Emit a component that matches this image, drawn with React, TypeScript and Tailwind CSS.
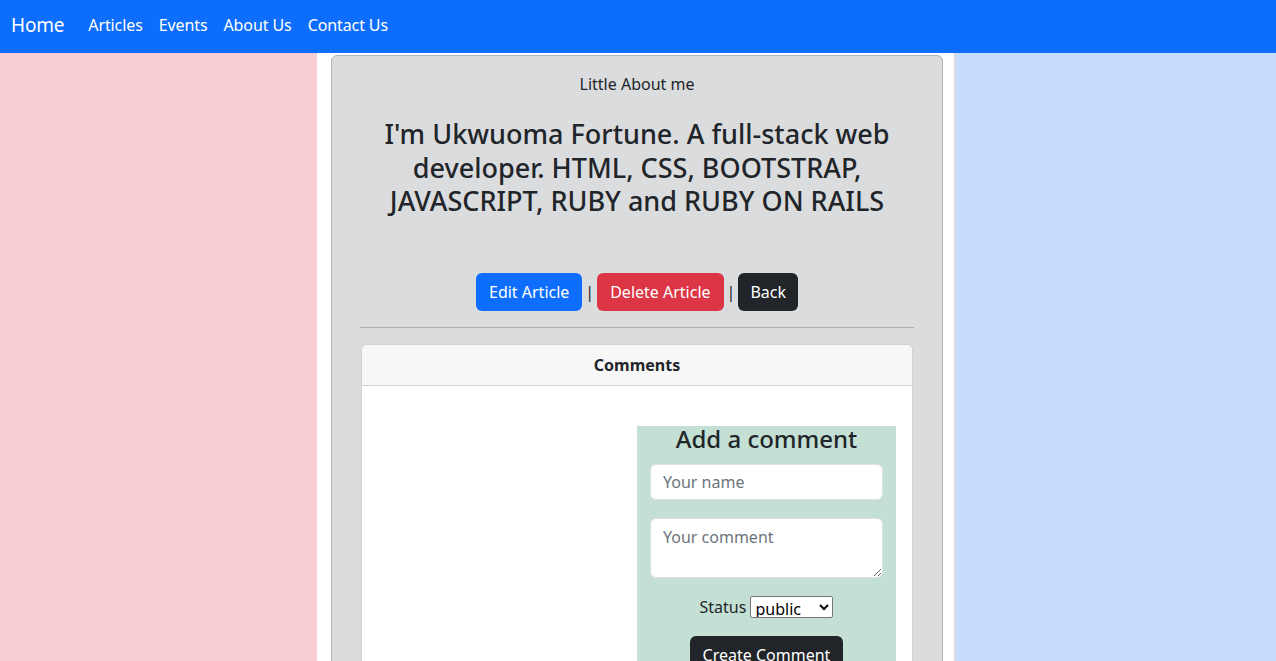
import React from "react";

export default function App() {
  return (
    <div className="min-h-screen bg-white text-[#212529] font-['Noto_Sans',sans-serif]">
      <nav className="h-[53px] bg-[#0d6efd] flex items-center pl-[11px] pb-[4px]">
        <span className="text-[19px] text-white mr-[16px] leading-[30px] tracking-[-0.2px]">Home</span>
        <div className="flex items-center text-[16px] text-white leading-[24px] tracking-[-0.1px]">
          <span className="px-[8px]">Articles</span>
          <span className="px-[8px]">Events</span>
          <span className="px-[8px]">About Us</span>
          <span className="px-[8px]">Contact Us</span>
        </div>
      </nav>
      <div className="flex h-[608px] overflow-hidden">
        <div className="w-[317px] bg-[#f6ced3]" />
        <div className="w-[639px] bg-white border-r-2 border-[#dcdddf] pl-[14px] pr-[11px] pt-[2px]">
          <div className="h-[640px] bg-[#dbdcde] border border-[#b3b4b6] rounded-[6px] px-[28px] pt-[16px]">
            <p className="text-center text-[16px] leading-[24px]">Little About me</p>
            <h3 className="mt-[21px] text-center text-[27px] leading-[33.6px] font-medium whitespace-nowrap">
              I'm Ukwuoma Fortune. A full-stack web
              <br />
              developer. HTML, CSS, BOOTSTRAP,
              <br />
              JAVASCRIPT, RUBY and RUBY ON RAILS
            </h3>
            <div className="mt-[55px] flex justify-center items-center gap-[3px] text-[16px] leading-[24px]">
              <span className="bg-[#0d6efd] text-white rounded-[6px] px-[13px] py-[7px]">Edit Article</span>
              <span className="text-[#212529]">|</span>
              <span className="bg-[#dc3545] text-white rounded-[6px] px-[13px] py-[7px]">Delete Article</span>
              <span className="text-[#212529]">|</span>
              <span className="bg-[#212529] text-white rounded-[6px] px-[12px] py-[7px]">Back</span>
            </div>
            <hr className="mt-[16px] border-t border-[#aeafb1]" />
            <div className="mt-[16px] mx-[1px] bg-white border border-[#cfd0d2] rounded-[6px] h-[400px]">
              <div className="h-[41px] bg-[#f7f7f7] border-b border-[#cfd0d2] rounded-t-[6px] flex items-center justify-center">
                <span className="text-[16px] font-bold">Comments</span>
              </div>
              <div className="grid grid-cols-2 px-[16px] pt-[40px]">
                <div />
                <div className="bg-[#c4e0d4] px-[13px] h-[300px]">
                  <h4 className="text-center text-[24px] leading-[26px] font-medium">Add a comment</h4>
                  <input
                    className="mt-[12px] w-full h-[36px] bg-white border border-[#dee2e6] rounded-[6px] px-[12px] text-[16px] placeholder:text-[#6c757d] outline-none"
                    placeholder="Your name"
                  />
                  <textarea
                    className="mt-[18px] block w-full h-[60px] bg-white border border-[#dee2e6] rounded-[6px] px-[12px] py-[6px] text-[16px] leading-[24px] placeholder:text-[#6c757d] outline-none"
                    placeholder="Your comment"
                  />
                  <div className="mt-[17px] flex justify-center items-center gap-[4px] text-[16px]">
                    <span>Status</span>
                    <select className="w-[83px] h-[22px] border border-[#767676] rounded-[2px] bg-white text-[16px] leading-[20px] text-black">
                      <option>public</option>
                      <option>private</option>
                      <option>archived</option>
                    </select>
                  </div>
                  <div className="mt-[17px] flex justify-center">
                    <span className="bg-[#212529] text-white rounded-[6px] px-[13px] py-[7px] text-[16px] leading-[24px]">Create Comment</span>
                  </div>
                </div>
              </div>
            </div>
          </div>
        </div>
        <div className="flex-1 bg-[#c5dcfd]" />
      </div>
    </div>
  );
}
